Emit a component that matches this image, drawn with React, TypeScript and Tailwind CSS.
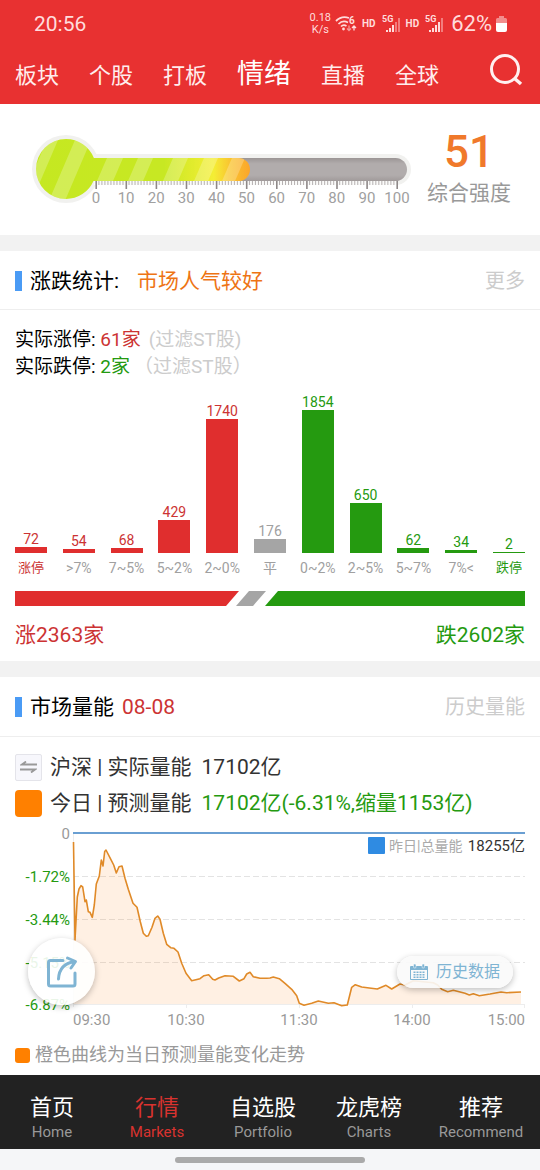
import { useState } from 'react';
import clsx from 'clsx';

const TABS = ['板块', '个股', '打板', '情绪', '直播', '全球'];

const NAV = [
  { zh: '首页', en: 'Home' },
  { zh: '行情', en: 'Markets' },
  { zh: '自选股', en: 'Portfolio' },
  { zh: '龙虎榜', en: 'Charts' },
  { zh: '推荐', en: 'Recommend' },
];

type Tone = 'up' | 'flat' | 'down';

interface Bucket {
  label: string;
  count: number;
  tone: Tone;
  limit?: boolean;
}

const BUCKETS: Bucket[] = [
  { label: '涨停', count: 72, tone: 'up', limit: true },
  { label: '>7%', count: 54, tone: 'up' },
  { label: '7~5%', count: 68, tone: 'up' },
  { label: '5~2%', count: 429, tone: 'up' },
  { label: '2~0%', count: 1740, tone: 'up' },
  { label: '平', count: 176, tone: 'flat' },
  { label: '0~2%', count: 1854, tone: 'down' },
  { label: '2~5%', count: 650, tone: 'down' },
  { label: '5~7%', count: 62, tone: 'down' },
  { label: '7%<', count: 34, tone: 'down' },
  { label: '跌停', count: 2, tone: 'down', limit: true },
];

const TEXT_TONE: Record<Tone, string> = {
  up: 'text-[#cc3333]',
  flat: 'text-[#a0a0a0]',
  down: 'text-[#259a10]',
};

const BAR_TONE: Record<Tone, string> = {
  up: 'bg-[#e02e2e]',
  flat: 'bg-[#a5a5a5]',
  down: 'bg-[#259a10]',
};

// forecast volume curve, [x, y] in chart units
const CURVE: [number, number][] = [
  [58.5, 17], [60, 115], [62.3, 72], [64, 64], [66, 60.7], [67.7, 62], [70, 76.7], [71.3, 75],
  [73.3, 86.7], [75, 87.3], [77.3, 92.3], [79.3, 80], [81.3, 59], [84.3, 51], [86.3, 35], [88, 41],
  [89.7, 26.5], [91, 25], [95.3, 33.3], [98.7, 40], [101.3, 48], [104, 41.7], [107, 41],
  [110, 53.3], [113.3, 64.3], [118, 78.3], [122, 82.3], [125.3, 96.7], [128.3, 108.3],
  [131.3, 111.3], [133.3, 110.7], [137, 102.3], [140, 93.3], [142.7, 91], [145, 94.3],
  [148.3, 108.3], [151.7, 119.3], [155.7, 122.7], [159, 123.3], [163, 127], [166.7, 138.3],
  [171, 148.3], [176.7, 155.7], [185, 153.7], [189, 150.7], [193.7, 149.7], [197.7, 154.3],
  [200, 155], [203.7, 153], [210, 150.7], [218.3, 151.3], [224.3, 156], [229, 153.7],
  [231.7, 149], [235, 147.3], [238.3, 151.7], [245, 153.3], [251.7, 153.3], [255, 153],
  [258.3, 152], [264.3, 153.7], [270, 158.3], [276.7, 164.3], [281.7, 170.7], [284.3, 178.3],
  [289, 180.3], [296.7, 178.3], [303.3, 176], [313.3, 178.3], [319, 177.7], [326.7, 180.7],
  [332.3, 180], [336.7, 162.3], [340.3, 159.7], [346.7, 162], [354.3, 163], [362.3, 164],
  [371, 160.3], [376.7, 164], [385, 159], [390, 160], [398.3, 155.7], [418.3, 157.7],
  [422.7, 160], [426.7, 164.3], [432.7, 166.7], [438.3, 165.3], [450, 168.3], [454.3, 170],
  [458.3, 168.7], [464.3, 170.7], [475, 169], [486, 167], [491.7, 167.7], [506, 167],
];

const Y_LABELS = ['0', '-1.72%', '-3.44%', '-5.15%', '-6.87%'];
const GRID_Y = [8, 51, 94, 137, 179];

function SignalIcon({ bars }: { bars: number }) {
  return (
    <svg width="20" height="20" viewBox="0 0 20 20" fill="#ffdcdc">
      <text x="0" y="8" fontSize="9" fontWeight="700">5G</text>
      {[0, 1, 2, 3, 4].map((i) => (
        <rect
          key={i}
          x={4 + i * 3}
          y={[16, 14, 11, 8, 4][i]}
          width="2"
          height={[2, 4, 7, 10, 14][i]}
          opacity={i < bars ? 1 : 0.45}
        />
      ))}
    </svg>
  );
}

function StatusBar() {
  return (
    <div className="flex h-12 items-center justify-between pl-[34px] pr-[33px] text-[#ffdcdc]">
      <span className="text-[21px] leading-6">20:56</span>
      <div className="flex items-center">
        <span className="text-center text-[11px] leading-3">
          0.18
          <br />
          K/s
        </span>
        <svg className="ml-1" width="23" height="18" viewBox="0 0 23 18" fill="none" stroke="#ffdcdc">
          <path d="M1 6C5 2 10 1.500 14 3" strokeWidth="1.800" />
          <path d="M3.500 9C6 6.500 10 6 13 7.500M6 11.500C7.500 10 10 10 11.500 11" strokeWidth="1.700" />
          <circle cx="8.500" cy="14" r="1.400" fill="#ffdcdc" stroke="none" />
          <text x="14" y="9" fontSize="10" fontWeight="700" fill="#ffdcdc" stroke="none">6</text>
          <path d="M14 10.500V15M12 13.500L14 15.500L16 13.500" strokeWidth="1.300" opacity="0.600" />
          <path d="M19 15.500V11M17 13L19 11L21 13" strokeWidth="1.300" />
        </svg>
        <span className="ml-1 text-[10px] leading-3 font-bold">HD</span>
        <span className="ml-1.5"><SignalIcon bars={3} /></span>
        <span className="ml-1 text-[10px] leading-3 font-bold">HD</span>
        <span className="ml-1.5"><SignalIcon bars={4} /></span>
        <span className="ml-1.5 text-[22px] leading-6">62%</span>
        <svg className="ml-1" width="11" height="16" viewBox="0 0 11 16" fill="#fff">
          <path d="M3 0H8V2H9.500Q11 2 11 3.500V7H0V3.500Q0 2 1.500 2H3Z" opacity="0.450" />
          <path d="M0 7H11V14Q11 16 9 16H2Q0 16 0 14Z" />
        </svg>
      </div>
    </div>
  );
}

function Thermometer() {
  return (
    <svg className="min-w-0 flex-1" viewBox="0 0 386 88" role="img" aria-label="综合强度 51">
      <defs>
        <linearGradient id="heat" gradientUnits="userSpaceOnUse" x1="8" y1="0" x2="222" y2="0">
          <stop offset="0" stopColor="#c5e822" />
          <stop offset="0.600" stopColor="#c8e824" />
          <stop offset="0.830" stopColor="#f4ee35" />
          <stop offset="0.900" stopColor="#f9c832" />
          <stop offset="1" stopColor="#fba52a" />
        </linearGradient>
        <linearGradient id="tube" x1="0" y1="0" x2="0" y2="1">
          <stop offset="0" stopColor="#9b9595" />
          <stop offset="0.250" stopColor="#b1acac" />
          <stop offset="0.750" stopColor="#b1acac" />
          <stop offset="1" stopColor="#a09a9a" />
        </linearGradient>
        <clipPath id="filled">
          <circle cx="38" cy="41" r="30" />
          <rect x="50" y="30" width="172" height="23" rx="11.500" />
        </clipPath>
      </defs>
      <circle cx="38" cy="41" r="34" fill="#f1f1ef" />
      <rect x="40" y="26" width="343" height="31" rx="15.500" fill="#f1f1ef" />
      <rect x="50" y="30" width="329" height="23" rx="11.500" fill="url(#tube)" />
      <g clipPath="url(#filled)">
        <rect x="0" y="0" width="230" height="80" fill="url(#heat)" />
        <g fill="#fff" opacity="0.230">
          <path d="M-8 75L22 5H33L3 75Z" />
          <path d="M20 75L50 5H66L36 75Z" />
          <path d="M69 53L79 30H95L85 53Z" />
          <path d="M100 53L110 30H125L115 53Z" />
          <path d="M135 53L145 30H160L150 53Z" />
          <path d="M166 53L176 30H190L180 53Z" />
          <path d="M194 53L204 30H217L207 53Z" />
        </g>
      </g>
      <rect x="66" y="53" width="304" height="4" fill="#fff" opacity="0.700" />
      {Array.from({ length: 101 }, (_, i) => (
        <rect
          key={i}
          x={67.4 + i * 3.01}
          y="53"
          width={i % 10 === 0 ? 1.6 : 1}
          height={i % 10 === 0 ? 8 : 4}
          fill={i % 10 === 0 ? '#8e8888' : '#b5b0b0'}
        />
      ))}
      {Array.from({ length: 11 }, (_, i) => (
        <text key={i} x={68 + i * 30.1} y="75" fontSize="15" textAnchor="middle" fill="#a0a0a0">
          {i * 10}
        </text>
      ))}
    </svg>
  );
}

function Distribution() {
  const max = Math.max(...BUCKETS.map((b) => b.count));
  return (
    <div className="flex justify-between pt-2.5">
      {BUCKETS.map((b) => (
        <div key={b.label} className="flex w-8 flex-col items-center whitespace-nowrap">
          <div className="flex h-[163px] w-8 flex-col items-center justify-end">
            <span className={clsx('text-sm leading-4', TEXT_TONE[b.tone])}>{b.count}</span>
            <div
              className={clsx('min-h-px w-8 shrink-0', BAR_TONE[b.tone])}
              style={{ height: Math.round((b.count / max) * 143) }}
            />
          </div>
          <span
            className={clsx(
              'mt-1.5 leading-[18px]',
              b.limit ? 'text-[13px]' : 'text-sm',
              b.limit ? TEXT_TONE[b.tone] : 'text-[#a0a0a0]',
            )}
          >
            {b.label}
          </span>
        </div>
      ))}
    </div>
  );
}

function VolumeChart() {
  const line = CURVE.map(([x, y]) => `${x},${y}`).join(' ');
  return (
    <svg className="block w-full" viewBox="0 0 510 206" fontSize="15">
      <g stroke="#e3e3e3" strokeWidth="1">
        {GRID_Y.slice(1, 4).map((y) => (
          <path key={y} d={`M58 ${y + 0.5}H510`} strokeDasharray="6 3" />
        ))}
        <path d="M58.500 8V182M58 179.500H510M171.500 179V183M284.500 179V183M397.500 179V183M509.500 179V183" stroke="#ededed" />
      </g>
      <polygon points={`58.5,179 ${line} 506,179`} fill="#fd8a2a" fillOpacity="0.130" />
      <polyline points={line} fill="none" stroke="#e08a28" strokeWidth="1.600" strokeLinejoin="round" />
      <path d="M58 8H510" stroke="#6a9fd2" strokeWidth="2" />
      {Y_LABELS.map((label, i) => (
        <text key={label} x="55" y={GRID_Y[i] + 6} textAnchor="end" fill={i === 0 ? '#999' : '#259a10'}>
          {label}
        </text>
      ))}
      <g fill="#999">
        <text x="58" y="200">09:30</text>
        <text x="171" y="200" textAnchor="middle">10:30</text>
        <text x="284" y="200" textAnchor="middle">11:30</text>
        <text x="397" y="200" textAnchor="middle">14:00</text>
        <text x="510" y="200" textAnchor="end">15:00</text>
      </g>
      <rect x="353" y="12" width="17" height="17" rx="1" fill="#2f8be2" />
      <text x="374" y="26" fontSize="14" fill="#aaa">昨日|总量能</text>
      <text x="510" y="26" textAnchor="end" fill="#333">18255亿</text>
    </svg>
  );
}

function ShareIcon() {
  return (
    <svg width="32" height="32" viewBox="0 0 32 32" fill="none" stroke="#7fb4d3" strokeWidth="3" strokeLinecap="round" strokeLinejoin="round">
      <path d="M17 4.500H4.500Q2.500 4.500 2.500 6.500V28Q2.500 30 4.500 30H27Q29 30 29 28V17" />
      <path d="M12.500 23C13 13 18 7 29 5.500M21.500 2L29.500 5.500L25 12" />
    </svg>
  );
}

function CalendarIcon() {
  return (
    <svg width="18" height="16" viewBox="0 0 18 16" fill="#7fb4d3">
      <path fillRule="evenodd" d="M1 2H17Q18 2 18 3V15Q18 16 17 16H1Q0 16 0 15V3Q0 2 1 2ZM1 6V15H17V6Z" />
      <rect x="3.500" width="2.500" height="4" rx="1" stroke="#fff" strokeWidth="0.500" />
      <rect x="12" width="2.500" height="4" rx="1" stroke="#fff" strokeWidth="0.500" />
      {[3.5, 6.5, 9.5, 12.5].map((x) =>
        [7.5, 10, 12.5].map((y) => <rect key={`${x}-${y}`} x={x} y={y} width="2" height="1.500" />),
      )}
    </svg>
  );
}

export default function App() {
  const [tab, setTab] = useState('情绪');

  return (
    <div className="flex min-h-screen flex-col bg-white font-['Roboto','Noto_Sans_CJK_SC',sans-serif]">
      <header className="bg-[#e83131]">
        <StatusBar />
        <div className="flex h-14 items-center justify-between pr-4 pb-0.5 pl-[15px]">
          <div className="flex items-baseline gap-[30px] whitespace-nowrap text-[#ffeded]">
            {TABS.map((t) => (
              <button
                key={t}
                onClick={() => setTab(t)}
                className={clsx('leading-8', t === tab ? 'text-[27px] text-white' : 'text-[22px]')}
              >
                {t}
              </button>
            ))}
          </div>
          <button aria-label="搜索" className="pb-2.5">
            <svg width="34" height="34" viewBox="0 0 34 34" fill="none" stroke="#fff0f0" strokeWidth="3">
              <circle cx="15" cy="16" r="13.500" />
              <path d="M24 25L31 31" strokeWidth="3.500" />
            </svg>
          </button>
        </div>
      </header>

      <main className="flex-1">
        <section className="flex h-[131px] items-center gap-3 px-7 pt-1">
          <Thermometer />
          <div className="flex w-[86px] flex-col items-center whitespace-nowrap">
            <span className="text-[44px] leading-[46px] font-medium text-[#f0792b]">51</span>
            <span className="mt-1 mb-2 text-[21px] leading-7 text-[#999]">综合强度</span>
          </div>
        </section>

        <div className="h-4 bg-[#f2f2f2]" />

        <section>
          <div className="flex h-[59px] items-center justify-between border-b border-[#eee] px-[15px] pt-0.5">
            <h2 className="flex items-center text-[21px] leading-7">
              <span className="mr-2 h-5 w-[7px] bg-[#4a9bf5]" />
              涨跌统计:
              <span className="ml-[18px] text-[#ee7414]">市场人气较好</span>
            </h2>
            <a href="#more" className="text-xl text-[#ccc]">更多</a>
          </div>

          <div className="px-[15px] pt-4">
            <p className="text-[19px] leading-[27px]">
              实际涨停: <span className="text-[#cc3333]">61家</span>
              <span className="ml-2 text-[#ccc]">(过滤ST股)</span>
            </p>
            <p className="text-[19px] leading-[27px]">
              实际跌停: <span className="text-[#259a10]">2家</span>
              <span className="ml-1 text-[#ccc]">（过滤ST股）</span>
            </p>

            <Distribution />

            <svg className="mt-3.5 block w-full" height="15" viewBox="0 0 510 15" preserveAspectRatio="none">
              <path d="M0 0H224L211 15H0Z" fill="#e02e2e" />
              <path d="M234 0H251L238 15H221Z" fill="#a5a5a5" />
              <path d="M263 0H510V15H250Z" fill="#259a10" />
            </svg>
            <div className="flex justify-between pt-[15px] pb-3 text-[21px] leading-7">
              <span className="text-[#cc3333]">涨2363家</span>
              <span className="text-[#259a10]">跌2602家</span>
            </div>
          </div>
        </section>

        <div className="h-4 bg-[#f2f2f2]" />

        <section>
          <div className="flex h-[60px] items-center justify-between border-b border-[#eee] px-[15px]">
            <h2 className="flex items-center text-[21px] leading-7">
              <span className="mr-2 h-5 w-[7px] bg-[#4a9bf5]" />
              市场量能
              <span className="ml-2 text-[#cc3333]">08-08</span>
            </h2>
            <a href="#history" className="text-xl text-[#ccc]">历史量能</a>
          </div>

          <div className="px-[15px] pt-3">
            <div className="flex h-9 items-center gap-2 text-[21px] leading-7 text-[#333]">
              <button aria-label="切换市场" className="flex size-[27px] items-center justify-center rounded-xs border border-[#e4e4ea] bg-[#f7f7fc]">
                <svg width="17" height="12" viewBox="0 0 17 12" fill="none" stroke="#999" strokeWidth="1.800">
                  <path d="M17 3.500H2L6 0.500M0 8.500H15L11 11.500" />
                </svg>
              </button>
              <span>沪深 | 实际量能</span>
              <span className="ml-0.5">17102亿</span>
            </div>
            <div className="flex h-9 items-center gap-2 text-[21px] leading-7 text-[#333]">
              <span className="size-[27px] rounded-sm bg-[#ff8000]" />
              <span>今日 | 预测量能</span>
              <span className="ml-0.5 text-[#259a10]">17102亿(-6.31%,缩量1153亿)</span>
            </div>

            <div className="relative mt-1">
              <VolumeChart />
              <button
                aria-label="分享"
                className="absolute top-[113px] left-[13px] flex size-[67px] items-center justify-center rounded-full bg-white/90 shadow-[0_2px_6px_rgba(0,0,0,0.25)]"
              >
                <ShareIcon />
              </button>
              <button className="absolute top-[131px] right-3 flex h-8 items-center gap-2 rounded-full bg-[#fafafa]/90 px-[13px] text-base text-[#7fb4d3] shadow-[0_2px_6px_rgba(0,0,0,0.25)]">
                <CalendarIcon />
                历史数据
              </button>
            </div>

            <p className="flex items-center gap-[5px] pt-2.5 pb-1.5 text-lg leading-7 text-[#999]">
              <span className="size-[15px] rounded-[3px] bg-[#ff8000]" />
              橙色曲线为当日预测量能变化走势
            </p>
          </div>
        </section>
      </main>

      <nav className="grid h-[74px] grid-cols-[52fr_53fr_53fr_53fr_59fr] items-center bg-[#222]">
        {NAV.map((n) => {
          const active = n.zh === '行情';
          return (
            <a key={n.en} href={`#${n.en}`} className="flex flex-col items-center pt-3">
              <span className={clsx('text-[22px] leading-7', active ? 'text-[#d9332f]' : 'text-white')}>{n.zh}</span>
              <span className={clsx('text-[15px] leading-5', active ? 'text-[#d9332f]' : 'text-[#999]')}>{n.en}</span>
            </a>
          );
        })}
      </nav>
      <div className="flex h-[21px] items-center justify-center bg-[#f5f6f8]">
        <span className="h-1.5 w-[190px] rounded-full bg-[#aaa]" />
      </div>
    </div>
  );
}
